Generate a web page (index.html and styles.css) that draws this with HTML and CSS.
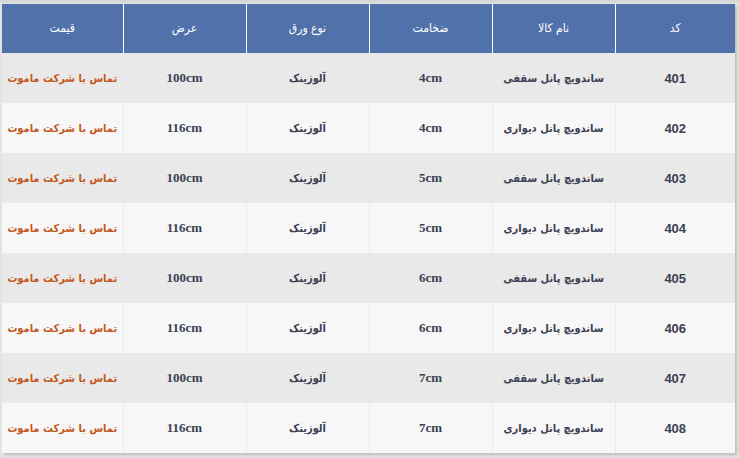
FILE: index.html
```html
<!DOCTYPE html>
<html lang="fa" dir="rtl">
<head>
<meta charset="utf-8">
<title>جدول قیمت</title>
<link rel="stylesheet" href="styles.css">
</head>
<body>
<div class="frame">
<table class="prices">
<thead>
<tr><th class="c-code">کد</th><th class="c-wide">نام کالا</th><th class="c-wide">ضخامت</th><th class="c-wide">نوع ورق</th><th class="c-wide">عرض</th><th class="c-price">قیمت</th></tr>
</thead>
<tbody>
<tr><td class="num">401</td><td class="fa">ساندویچ پانل سقفی</td><td class="lat">4cm</td><td class="fa">آلوزینک</td><td class="lat">100cm</td><td class="price">تماس با شرکت ماموت</td></tr>
<tr><td class="num">402</td><td class="fa">ساندویچ پانل دیواری</td><td class="lat">4cm</td><td class="fa">آلوزینک</td><td class="lat">116cm</td><td class="price">تماس با شرکت ماموت</td></tr>
<tr><td class="num">403</td><td class="fa">ساندویچ پانل سقفی</td><td class="lat">5cm</td><td class="fa">آلوزینک</td><td class="lat">100cm</td><td class="price">تماس با شرکت ماموت</td></tr>
<tr><td class="num">404</td><td class="fa">ساندویچ پانل دیواری</td><td class="lat">5cm</td><td class="fa">آلوزینک</td><td class="lat">116cm</td><td class="price">تماس با شرکت ماموت</td></tr>
<tr><td class="num">405</td><td class="fa">ساندویچ پانل سقفی</td><td class="lat">6cm</td><td class="fa">آلوزینک</td><td class="lat">100cm</td><td class="price">تماس با شرکت ماموت</td></tr>
<tr><td class="num">406</td><td class="fa">ساندویچ پانل دیواری</td><td class="lat">6cm</td><td class="fa">آلوزینک</td><td class="lat">116cm</td><td class="price">تماس با شرکت ماموت</td></tr>
<tr><td class="num">407</td><td class="fa">ساندویچ پانل سقفی</td><td class="lat">7cm</td><td class="fa">آلوزینک</td><td class="lat">100cm</td><td class="price">تماس با شرکت ماموت</td></tr>
<tr><td class="num">408</td><td class="fa">ساندویچ پانل دیواری</td><td class="lat">7cm</td><td class="fa">آلوزینک</td><td class="lat">116cm</td><td class="price">تماس با شرکت ماموت</td></tr>
</tbody>
</table>
</div>
</body>
</html>
```
FILE: styles.css
```css
html, body {
  margin: 0;
  padding: 0;
}
body {
  background: #e2e2e2;
  width: 739px;
  height: 458px;
  overflow: hidden;
  font-family: "DejaVu Sans Condensed", "DejaVu Sans", sans-serif;
}
.frame {
  padding: 4px 4px 5px 2px;
  background: linear-gradient(to bottom, #d8d8d8 0, #d8d8d8 3px, #e4e4e4 3px);
}
.prices {
  width: 733px;
  border-collapse: collapse;
  table-layout: fixed;
  box-shadow: 2px 2px 3px rgba(0, 0, 0, 0.18);
}
.c-code { width: 120px; }
.c-wide { width: 123px; }
.c-price { width: 121px; }
.prices th {
  background: #5071aa;
  color: #ffffff;
  font-family: "DejaVu Sans Condensed", "DejaVu Sans", sans-serif;
  font-weight: normal;
  font-size: 12px;
  height: 49px;
  padding: 0 0 2px;
  border-left: 1px solid #ffffff;
  text-align: center;
  box-sizing: border-box;
  white-space: nowrap;
}
.prices th:last-child {
  border-left: none;
}
.prices td {
  height: 50px;
  padding: 0;
  text-align: center;
  color: #3b4053;
  border-left: 1px solid #e9e9e9;
  box-sizing: border-box;
  white-space: nowrap;
}
.prices td:last-child {
  border-left: none;
}
.prices tbody tr:nth-child(odd) td {
  background: #e9e9e9;
}
.prices tbody tr:nth-child(even) td {
  background: #f7f7f7;
}
.fa {
  font-family: "DejaVu Sans Condensed", "DejaVu Sans", sans-serif;
  font-weight: bold;
  font-size: 11px;
}
.lat {
  font-family: "Liberation Serif", serif;
  font-weight: bold;
  font-size: 13px;
}
.num {
  font-family: "Liberation Sans", sans-serif;
  font-weight: bold;
  font-size: 13px;
}
.prices td.price {
  font-family: "DejaVu Sans Condensed", "DejaVu Sans", sans-serif;
  font-weight: bold;
  font-size: 11px;
  color: #c4581c;
}
```
